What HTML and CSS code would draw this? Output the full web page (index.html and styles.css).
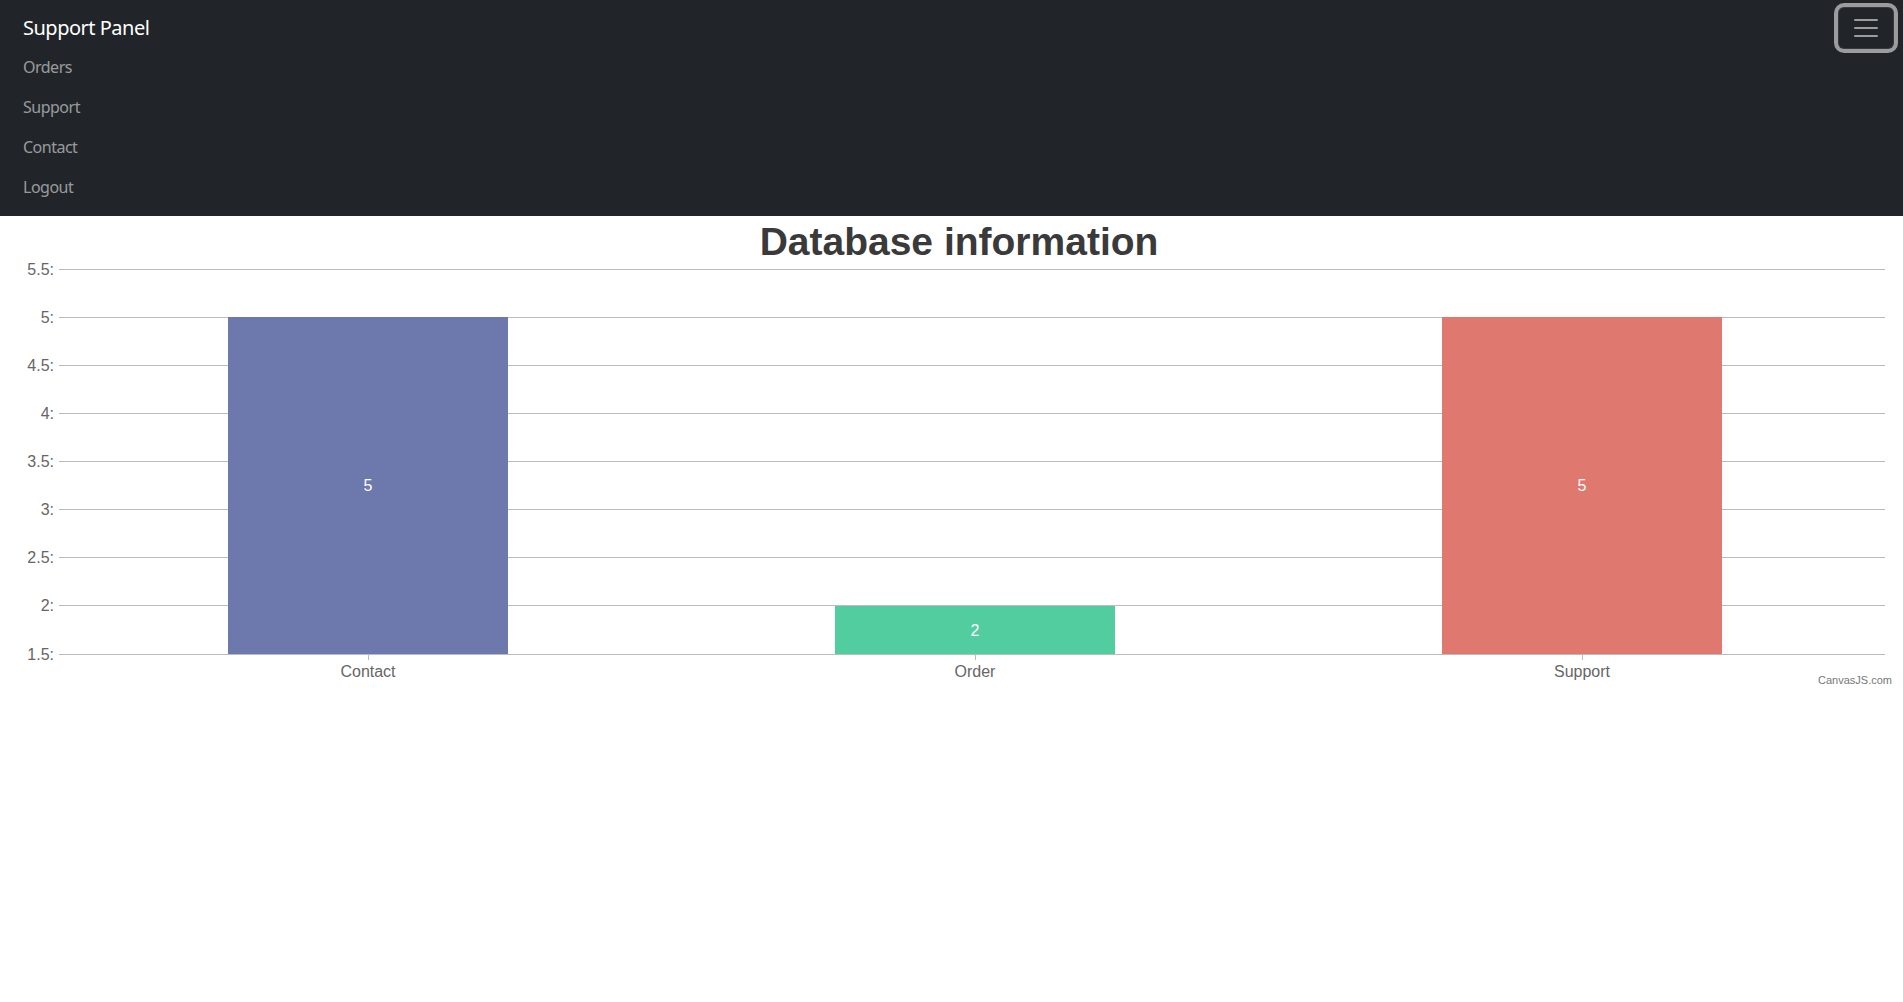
FILE: index.html
```html
<!DOCTYPE html>
<html lang="en">
<head>
<meta charset="utf-8">
<title>Support Panel</title>
<link rel="stylesheet" href="styles.css">
</head>
<body>
<nav class="navbar">
  <a class="brand" href="#">Support Panel</a>
  <button class="toggler" type="button" aria-label="Toggle navigation">
    <svg class="toggler-icon" width="30" height="30" viewBox="0 0 30 30"><path d="M4 7h22M4 15h22M4 23h22" stroke="rgba(255,255,255,0.55)" stroke-width="2" stroke-linecap="round" fill="none"/></svg>
  </button>
  <ul class="nav-list">
    <li><a class="nav-link" href="#">Orders</a></li>
    <li><a class="nav-link" href="#">Support</a></li>
    <li><a class="nav-link" href="#">Contact</a></li>
    <li><a class="nav-link" href="#">Logout</a></li>
  </ul>
</nav>
<main class="chart-wrap">
  <svg class="chart" width="1903" height="480" viewBox="0 0 1903 480">
    <text class="chart-title" x="959" y="39" text-anchor="middle">Database information</text>
    <g class="grid">
      <line x1="59" x2="1885" y1="53.5" y2="53.5"/>
      <line x1="59" x2="1885" y1="101.5" y2="101.5"/>
      <line x1="59" x2="1885" y1="149.5" y2="149.5"/>
      <line x1="59" x2="1885" y1="197.5" y2="197.5"/>
      <line x1="59" x2="1885" y1="245.5" y2="245.5"/>
      <line x1="59" x2="1885" y1="293.5" y2="293.5"/>
      <line x1="59" x2="1885" y1="341.5" y2="341.5"/>
      <line x1="59" x2="1885" y1="389.5" y2="389.5"/>
    </g>
    <g class="ylabels">
      <text x="54" y="59">5.5:</text>
      <text x="54" y="107">5:</text>
      <text x="54" y="155">4.5:</text>
      <text x="54" y="203">4:</text>
      <text x="54" y="251">3.5:</text>
      <text x="54" y="299">3:</text>
      <text x="54" y="347">2.5:</text>
      <text x="54" y="395">2:</text>
      <text x="54" y="444">1.5:</text>
    </g>
    <rect x="228" y="101" width="280" height="337" fill="#6D78AD"/>
    <rect x="835" y="390" width="280" height="48" fill="#51CDA0"/>
    <rect x="1442" y="101" width="280" height="337" fill="#DF7970"/>
    <g class="grid">
      <line x1="59" x2="1885" y1="438.5" y2="438.5"/>
      <line x1="368.5" x2="368.5" y1="438" y2="444"/>
      <line x1="975.5" x2="975.5" y1="438" y2="444"/>
      <line x1="1582.5" x2="1582.5" y1="438" y2="444"/>
    </g>
    <g class="values">
      <text x="368" y="275">5</text>
      <text x="975" y="420">2</text>
      <text x="1582" y="275">5</text>
    </g>
    <g class="xlabels">
      <text x="368" y="461">Contact</text>
      <text x="975" y="461">Order</text>
      <text x="1582" y="461">Support</text>
    </g>
    <text class="credit" x="1892" y="468" text-anchor="end">CanvasJS.com</text>
  </svg>
</main>
</body>
</html>
```
FILE: styles.css
```css
* { box-sizing: border-box; }
html, body { margin: 0; padding: 0; background: #fff; }
body { font-family: "Noto Sans", "Open Sans", sans-serif; }

.navbar {
  background: #212529;
  display: flex;
  flex-wrap: wrap;
  justify-content: space-between;
  align-items: flex-start;
  padding: 8px 9px 8px 23px;
  height: 216px;
}
.brand {
  color: #fff;
  text-decoration: none;
  font-size: 20px;
  line-height: 30px;
  padding: 5px 0;
  letter-spacing: -0.5px;
}
.toggler {
  width: 56px;
  height: 42px;
  margin-top: -1px;
  padding: 0;
  background: transparent;
  border: 1px solid rgba(255,255,255,0.1);
  border-radius: 6px;
  box-shadow: 0 0 0 4px #9b9c9e;
  display: flex;
  align-items: center;
  justify-content: center;
}
.toggler-icon { display: block; }
.nav-list {
  flex-basis: 100%;
  list-style: none;
  margin: 0;
  padding: 0;
}
.nav-link {
  display: block;
  padding: 6px 0 10px;
  font-size: 16px;
  line-height: 24px;
  color: rgba(255,255,255,0.55);
  text-decoration: none;
  letter-spacing: -0.5px;
}

.chart-wrap { display: block; }
.chart { display: block; font-family: "Liberation Sans", Arial, sans-serif; }
.chart-title { font-size: 39px; font-weight: bold; fill: #3a3a3a; }
.grid line { stroke: #bbbbbb; stroke-width: 1; shape-rendering: crispEdges; }
.ylabels text { font-size: 16px; fill: #666; text-anchor: end; }
.xlabels text { font-size: 16px; fill: #666; text-anchor: middle; }
.values text { font-size: 16px; fill: #fff; text-anchor: middle; }
.credit { font-size: 11px; fill: #777; }
```
